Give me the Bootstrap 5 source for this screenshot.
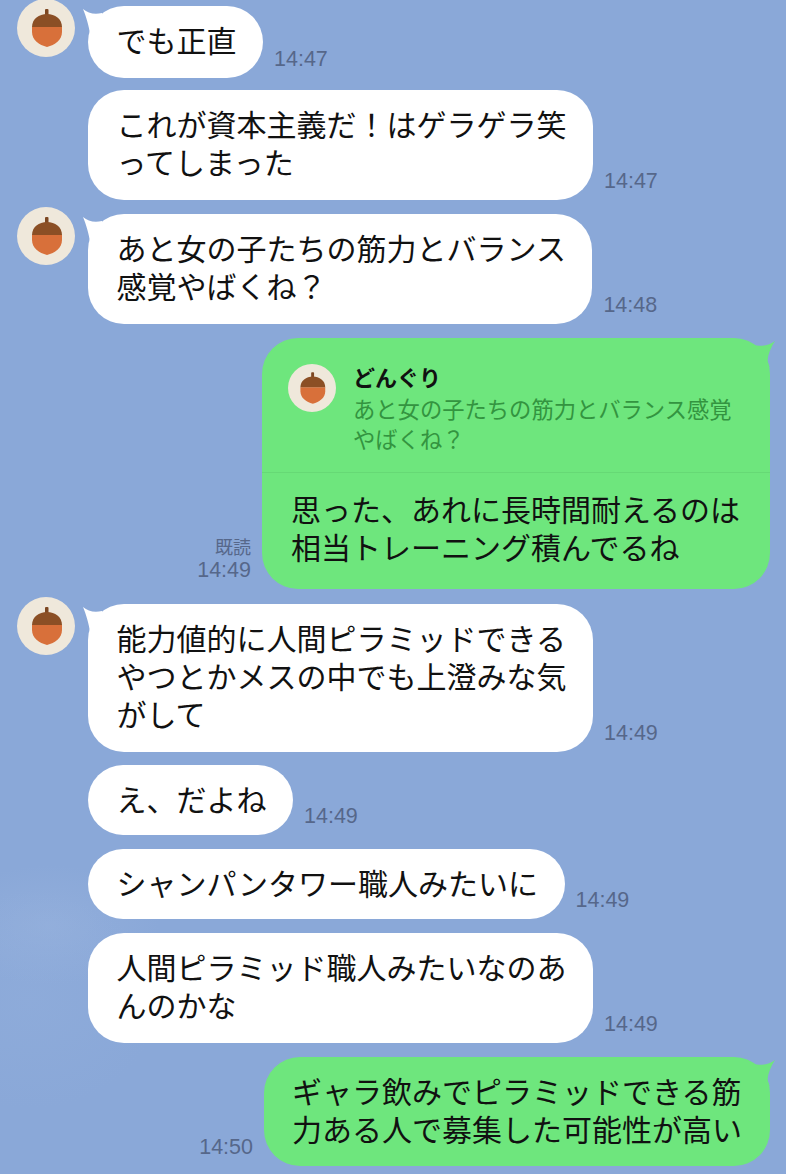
<!DOCTYPE html>
<html lang="ja">
<head>
  <meta charset="UTF-8" />
  <meta name="viewport" content="width=device-width, initial-scale=1.0" />
  <title>トーク</title>
  <link href="https://cdn.jsdelivr.net/npm/bootstrap@5.3.0/dist/css/bootstrap.min.css" rel="stylesheet" />
  <style>
    html, body { height: 1174px; overflow: hidden; }
    body {
      background-color: #8aa8d8;
      background-image:
        radial-gradient(ellipse 110px 60px at 50px 925px, rgba(160, 185, 225, .35), transparent),
        radial-gradient(ellipse 130px 110px at 30px 1000px, rgba(150, 178, 222, .3), transparent);
      font-family: "Noto Sans CJK JP", "Liberation Sans", sans-serif;
      color: #111;
    }
    .chat-log { padding: 6px 16px 0 17px; }
    .chat-line { margin-bottom: 14px; }
    .chat-line.tight { margin-bottom: 12px; }
    .chat-line.roomy { margin-bottom: 15px; }
    .chat-line.snug { margin-bottom: 13px; }
    .ava-slot { width: 71px; flex: none; }
    .ava-round { width: 58px; height: 58px; margin-top: -7px; display: block; }
    .bubble {
      position: relative;
      padding: 14px 26.5px 20px 28.5px;
      border-radius: 36px;
      font-size: 30px;
      line-height: 38px;
      white-space: nowrap;
    }
    .bubble.one-line { padding-top: 14px; padding-bottom: 18px; }
    .bubble-in { background: #fff; }
    .bubble-out { background: #6ee67d; }
    .tail { position: absolute; top: 0; width: 24px; height: 26px; }
    .tail-in { left: -6px; top: 2px; }
    .tail-out { right: -6px; top: 3px; }
    .stamp {
      font-family: "Liberation Sans", sans-serif;
      font-size: 21.5px;
      line-height: 24px;
      color: #56678a;
      padding-bottom: 7px;
    }
    .stamp-in { margin-left: 11px; }
    .stamp-out { margin-right: 11px; text-align: right; }
    .seen { font-family: "Noto Sans CJK JP", sans-serif; font-size: 18px; }
    .quoted {
      width: 508px;
      padding: 26px 26px 18px;
      gap: 17px;
      border-bottom: 1px solid #66d975;
    }
    .quoted-ava { width: 48px; height: 48px; flex: none; }
    .quoted-copy { margin-top: -3px; margin-bottom: 1px; }
    .quoted-name { font-size: 22px; line-height: 30px; margin-bottom: 2px; font-weight: 700; color: #111; }
    .quoted-text { font-size: 22.3px; line-height: 30px; color: #339440; }
    .bubble.bubble-reply { padding: 0; }
    .reply-body { padding: 16px 29px 24px; }
    .bubble.wide-out { padding: 14px 28px 19px; }
  </style>
</head>
<body>
  <svg class="d-none">
    <symbol id="acorn" viewBox="0 0 58 58">
      <circle cx="29" cy="29" r="29" fill="#efe8db" />
      <rect x="28" y="10" width="3.5" height="7" rx="1" fill="#7d4722" />
      <path d="M15 28H45V33C45 41 38 46 30 48C22 46 15 41 15 33Z" fill="#d8703a" />
      <path d="M15 28C15 20 22 15 30 15C38 15 45 20 45 28Z" fill="#8b4f25" />
    </symbol>
    <symbol id="tail-left" viewBox="0 0 24 26">
      <path d="M1 1C6 5 12 7 20 5V26H8C7 18 4 8 1 1Z" fill="#fff" />
    </symbol>
    <symbol id="tail-right" viewBox="0 0 24 26">
      <path d="M23 0C18 4 10 6 1 4V26H17.5L15.5 20C16 13 19 6 23 0Z" fill="#6ee67d" />
    </symbol>
  </svg>

  <div class="chat-log">
    <div class="chat-line tight d-flex">
      <div class="ava-slot"><svg class="ava-round"><use href="#acorn" /></svg></div>
      <div class="bubble bubble-in"><svg class="tail tail-in"><use href="#tail-left" /></svg>でも正直</div>
      <div class="stamp stamp-in align-self-end">14:47</div>
    </div>

    <div class="chat-line d-flex">
      <div class="ava-slot"></div>
      <div class="bubble bubble-in">これが資本主義だ！はゲラゲラ笑<br />ってしまった</div>
      <div class="stamp stamp-in align-self-end">14:47</div>
    </div>

    <div class="chat-line d-flex">
      <div class="ava-slot"><svg class="ava-round"><use href="#acorn" /></svg></div>
      <div class="bubble bubble-in"><svg class="tail tail-in"><use href="#tail-left" /></svg>あと女の子たちの筋力とバランス<br />感覚やばくね？</div>
      <div class="stamp stamp-in align-self-end">14:48</div>
    </div>

    <div class="chat-line roomy d-flex justify-content-end">
      <div class="stamp stamp-out align-self-end"><div class="seen">既読</div>14:49</div>
      <div class="bubble bubble-out bubble-reply">
        <svg class="tail tail-out"><use href="#tail-right" /></svg>
        <div class="quoted d-flex">
          <svg class="quoted-ava"><use href="#acorn" /></svg>
          <div class="quoted-copy">
            <div class="quoted-name">どんぐり</div>
            <div class="quoted-text">あと女の子たちの筋力とバランス感覚<br />やばくね？</div>
          </div>
        </div>
        <div class="reply-body">思った、あれに長時間耐えるのは<br />相当トレーニング積んでるね</div>
      </div>
    </div>

    <div class="chat-line snug d-flex">
      <div class="ava-slot"><svg class="ava-round"><use href="#acorn" /></svg></div>
      <div class="bubble bubble-in"><svg class="tail tail-in"><use href="#tail-left" /></svg>能力値的に人間ピラミッドできる<br />やつとかメスの中でも上澄みな気<br />がして</div>
      <div class="stamp stamp-in align-self-end">14:49</div>
    </div>

    <div class="chat-line d-flex">
      <div class="ava-slot"></div>
      <div class="bubble bubble-in one-line">え、だよね</div>
      <div class="stamp stamp-in align-self-end">14:49</div>
    </div>

    <div class="chat-line d-flex">
      <div class="ava-slot"></div>
      <div class="bubble bubble-in one-line">シャンパンタワー職人みたいに</div>
      <div class="stamp stamp-in align-self-end">14:49</div>
    </div>

    <div class="chat-line d-flex">
      <div class="ava-slot"></div>
      <div class="bubble bubble-in">人間ピラミッド職人みたいなのあ<br />んのかな</div>
      <div class="stamp stamp-in align-self-end">14:49</div>
    </div>

    <div class="chat-line d-flex justify-content-end">
      <div class="stamp stamp-out align-self-end">14:50</div>
      <div class="bubble bubble-out wide-out"><svg class="tail tail-out"><use href="#tail-right" /></svg>ギャラ飲みでピラミッドできる筋<br />力ある人で募集した可能性が高い</div>
    </div>
  </div>
  <script src="https://cdn.jsdelivr.net/npm/bootstrap@5.3.0/dist/js/bootstrap.bundle.min.js"></script>
</body>
</html>
